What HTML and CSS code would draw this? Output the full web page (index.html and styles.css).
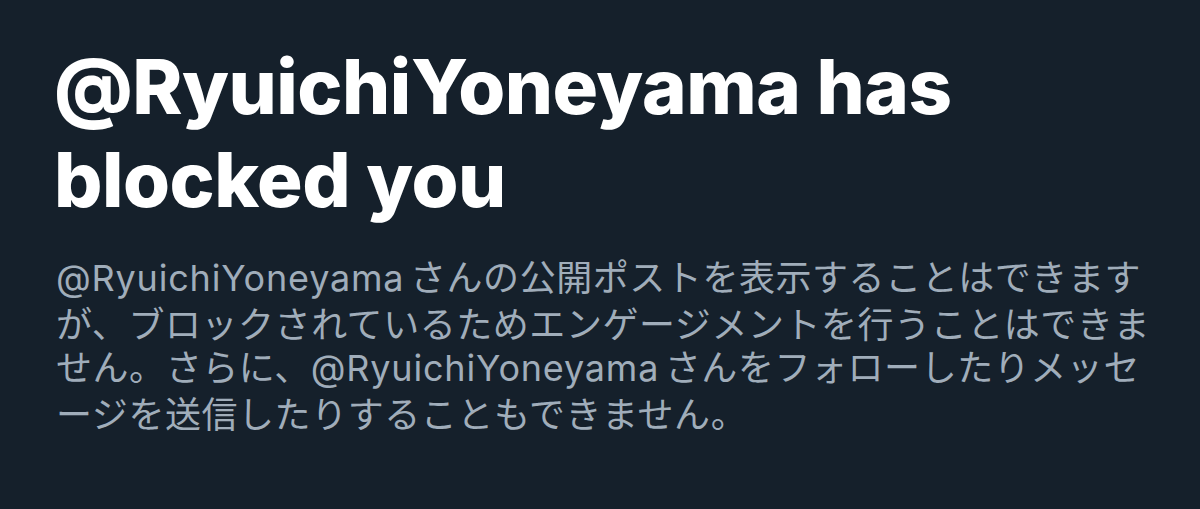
FILE: index.html
```html
<html>
  <head>
    <meta charset="utf-8">
    <link rel="stylesheet" href="styles.css">
  </head>
  <body>
    <div class="blocked">
      <h1 class="title">@RyuichiYoneyama has<br>blocked you</h1>
      <p class="detail">
        <span class="handle">@RyuichiYoneyama</span> さんの公開ポストを表示することはできます<br>
        が、ブロックされているためエンゲージメントを行うことはできま<br>
        せん。さらに、<span class="handle">@RyuichiYoneyama</span> さんをフォローしたりメッセ<br>
        ージを送信したりすることもできません。
      </p>
    </div>
  </body>
</html>
```

FILE: styles.css
```css
html, body {
  margin: 0;
  background-color: #15202b;
}
.blocked {
  padding: 40px 0 0 54px;
}
.title {
  margin: 0;
  color: #ffffff;
  font-family: Inter, 'Liberation Sans', sans-serif;
  font-weight: 800;
  font-size: 76px;
  letter-spacing: -0.5px;
  line-height: 93px;
}
.detail {
  margin: 28px 0 0 2px;
  color: #a0adba;
  font-family: 'Noto Sans CJK JP', sans-serif;
  font-size: 36px;
  letter-spacing: 0.55px;
  line-height: 43.5px;
  white-space: nowrap;
}
.handle {
  font-family: Inter, 'Noto Sans', sans-serif;
  letter-spacing: 0.8px;
  margin-right: -3px;
}
```
